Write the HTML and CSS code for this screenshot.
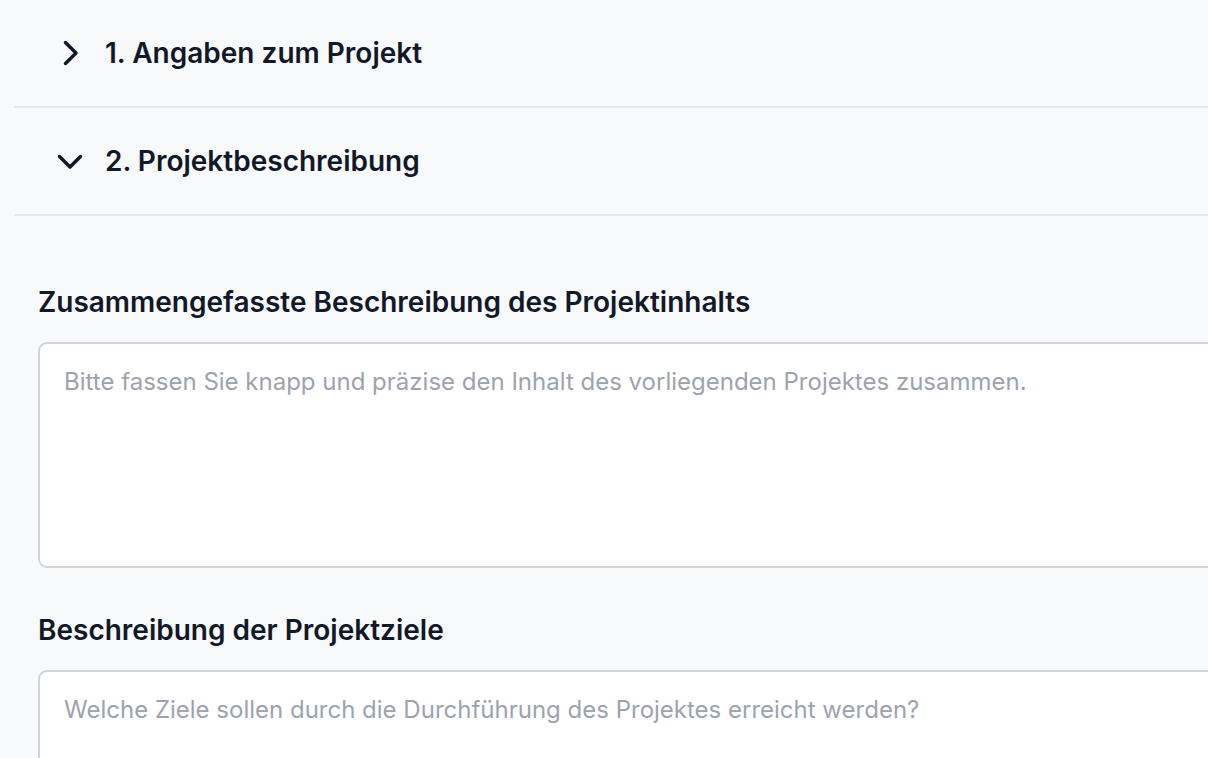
FILE: index.html
```html
<!DOCTYPE html>
<html lang="de">
<head>
<meta charset="utf-8">
<link rel="stylesheet" href="styles.css">
</head>
<body>
<div class="accordion">
  <div class="section">
    <div class="header">
      <svg class="chev" viewBox="0 0 24 24" width="36" height="36"><path d="M9 5l7 7-7 7" fill="none" stroke="#111827" stroke-width="2.3" stroke-linecap="round" stroke-linejoin="round"/></svg>
      <h2 class="title">1. Angaben zum Projekt</h2>
    </div>
  </div>
  <div class="section">
    <div class="header">
      <svg class="chev" viewBox="0 0 24 24" width="36" height="36"><path d="M5 9l7 7 7-7" fill="none" stroke="#111827" stroke-width="2.3" stroke-linecap="round" stroke-linejoin="round"/></svg>
      <h2 class="title">2. Projektbeschreibung</h2>
    </div>
  </div>
  <div class="content">
    <div class="field">
      <label class="label">Zusammengefasste Beschreibung des Projektinhalts</label>
      <textarea class="input tall" placeholder="Bitte fassen Sie knapp und präzise den Inhalt des vorliegenden Projektes zusammen."></textarea>
    </div>
    <div class="field">
      <label class="label">Beschreibung der Projektziele</label>
      <textarea class="input tall" placeholder="Welche Ziele sollen durch die Durchführung des Projektes erreicht werden?"></textarea>
    </div>
  </div>
</div>
</body>
</html>
```
FILE: styles.css
```css
html, body {
  margin: 0;
  padding: 0;
  background: #f8f9fb;
  overflow: hidden;
  height: 758px;
}
body {
  font-family: Inter, "Noto Sans", sans-serif;
  color: #111827;
}
.accordion {
  margin-left: 14px;
  width: 1300px;
}
.section {
  border-bottom: 2px solid #e5e7eb;
}
.header {
  height: 106px;
  display: flex;
  align-items: center;
  padding-left: 38px;
  gap: 17px;
}
.chev {
  flex: none;
}
.title {
  margin: 0;
  font-size: 28px;
  font-weight: 600;
  line-height: 34px;
}
.content {
  padding: 69px 0 0 24px;
  display: flex;
  flex-direction: column;
  gap: 45px;
}
.field {
  display: flex;
  flex-direction: column;
  gap: 23px;
}
.label {
  font-size: 28px;
  font-weight: 600;
  line-height: 34px;
}
.input {
  box-sizing: border-box;
  width: 1260px;
  height: 226px;
  border: 2px solid #d1d5db;
  border-radius: 9px;
  background: #fff;
  padding: 22px 24px;
  font-family: Inter, "Noto Sans", sans-serif;
  font-size: 24px;
  line-height: 32px;
  color: #111827;
  resize: none;
  outline: none;
  display: block;
}
.input::placeholder {
  color: #9ca3af;
}
```
